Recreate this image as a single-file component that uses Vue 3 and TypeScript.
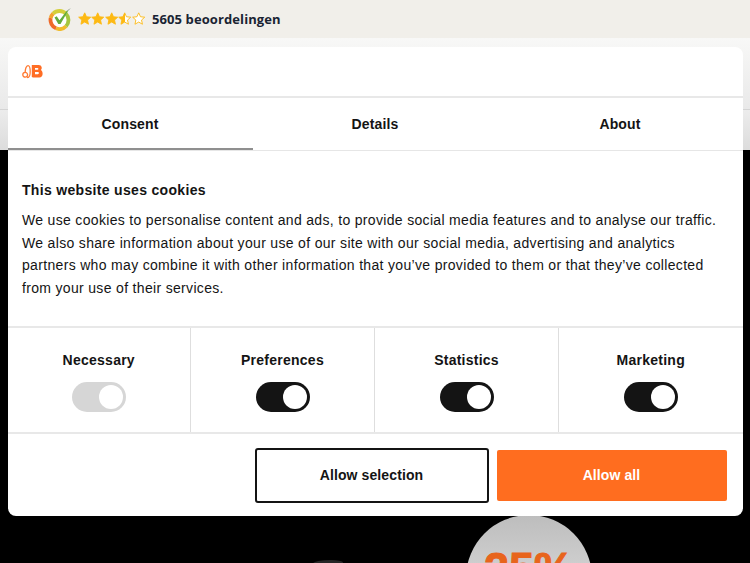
<script setup lang="ts">
const tabs = ["Consent", "Details", "About"]
const toggles = [
  { label: "Necessary", locked: true },
  { label: "Preferences", locked: false },
  { label: "Statistics", locked: false },
  { label: "Marketing", locked: false },
]
</script>

<template>
  <div class="page">
    <header class="review-bar">
      <svg class="seal" viewBox="0 0 24 24" width="24" height="24">
        <circle cx="11.500" cy="13" r="9" fill="#fff" />
        <path d="M5.100 6.600A9 9 0 0 1 18 6.800" fill="none" stroke="#d4cf3a" stroke-width="3.800" />
        <path d="M18 6.800A9 9 0 0 1 18 19.200" fill="none" stroke="#a5c63f" stroke-width="3.800" />
        <path d="M18 19.200A9 9 0 0 1 8 21.300" fill="none" stroke="#f0bb2c" stroke-width="3.800" />
        <path d="M8 21.300A9 9 0 0 1 2.700 11" fill="none" stroke="#ee6a2a" stroke-width="3.800" />
        <path d="M2.700 11A9 9 0 0 1 5.100 6.600" fill="none" stroke="#f3a42c" stroke-width="3.800" />
        <path d="M6.500 10.500l2.200-1.200 2.800 4L19 3.500l1 .6-7.500 12.800h-2.200z" fill="#62ac3c" />
        <path d="M19 3.500l4-2.500-3 3.100z" fill="#8c9a84" />
      </svg>
      <div class="stars">
        <svg v-for="n in 5" :key="n" viewBox="0 0 24 24" width="13.400" height="13.400">
          <defs>
            <linearGradient id="half">
              <stop offset="50%" stop-color="#fdb913" />
              <stop offset="50%" stop-color="#fff" />
            </linearGradient>
          </defs>
          <path
            d="M12 1.500l3.200 7 7.600.8-5.700 5.100 1.600 7.500L12 18l-6.700 3.900 1.600-7.500L1.200 9.300l7.600-.8z"
            :fill="n < 4 ? '#fdb913' : n === 4 ? 'url(#half)' : '#fff'"
            stroke="#fdb913"
            stroke-width="1.600"
          />
        </svg>
      </div>
      <span class="review-count">5605 beoordelingen</span>
    </header>

    <div class="backdrop">
      <div class="backdrop-top"></div>
      <div class="backdrop-mid"></div>
      <div class="backdrop-dark">
        <div class="promo-shape"></div>
        <div class="promo-circle"><span>25%</span></div>
      </div>
    </div>

    <section class="dialog">
      <div class="logo-row">
        <svg class="logo" viewBox="0 0 22 15" width="22" height="15">
          <circle cx="3.200" cy="10.800" r="2.400" fill="none" stroke="#ff7a33" stroke-width="1.300" />
          <path
            d="M3.200 8.400C3.200 5 4.200 1.600 6 1.600c1.700 0 2.200 3 2.200 6 0 2.600-.2 5.900-2.600 5.900"
            fill="none"
            stroke="#ff7a33"
            stroke-width="1.300"
            stroke-linecap="round"
          />
          <path d="M9.800 1h7c3 0 3.800 3.500 2.100 5 2.500 1.200 2.600 7.500-1.500 7.500h-6.300c-1.200 0-1.500-.9-1.300-2z" fill="#ff6d24" />
          <path d="M13 3.900h2.500c1.200 0 1.200 1.800 0 1.800H13zM13 8h2.900c1.400 0 1.400 2.200 0 2.200H13z" fill="#fff" />
        </svg>
      </div>

      <nav class="tabs">
        <div v-for="(tab, i) in tabs" :key="tab" class="tab" :class="{ active: i === 0 }">{{ tab }}</div>
      </nav>

      <div class="body">
        <h2>This website uses cookies</h2>
        <p>
          We use cookies to personalise content and ads, to provide social media features and to analyse our traffic.
          We also share information about your use of our site with our social media, advertising and analytics
          partners who may combine it with other information that you’ve provided to them or that they’ve collected
          from your use of their services.
        </p>
      </div>

      <div class="selector">
        <div v-for="item in toggles" :key="item.label" class="selector-cell">
          <strong>{{ item.label }}</strong>
          <span class="switch" :class="{ locked: item.locked }"><i></i></span>
        </div>
      </div>

      <div class="actions">
        <button class="btn outline">Allow selection</button>
        <button class="btn solid">Allow all</button>
      </div>
    </section>
  </div>
</template>

<style>
html,
body {
  margin: 0;
  background: #000;
}
</style>

<style scoped>
.page {
  position: relative;
  width: 750px;
  height: 563px;
  overflow: hidden;
  background: #000;
  font-family: "Liberation Sans", Arial, sans-serif;
  color: #141414;
}

.review-bar {
  height: 38px;
  padding-left: 48px;
  display: flex;
  align-items: center;
  background: #f1efea;
  box-sizing: border-box;
}

.seal {
  flex: none;
}

.stars {
  display: flex;
  margin-left: 6px;
}

.review-count {
  margin-left: 7px;
  font-family: "Open Sans", sans-serif;
  font-size: 13px;
  font-weight: 700;
  letter-spacing: 0.1px;
  color: #1a2433;
}

.backdrop {
  height: 525px;
  display: flex;
  flex-direction: column;
}

.backdrop-top {
  height: 71px;
  flex: none;
  background: linear-gradient(#f8f8f7, #e9e9e9);
  border-bottom: 1px solid #d4d4d4;
}

.backdrop-mid {
  height: 40px;
  flex: none;
  background: linear-gradient(#ececec, #dcdcdc);
}

.backdrop-dark {
  flex: 1;
  position: relative;
  background: #000;
}

.promo-shape {
  position: absolute;
  left: 313px;
  top: 410px;
  width: 30px;
  height: 6px;
  border-radius: 60% 40% 0 0;
  background: #262626;
}

.promo-circle {
  position: absolute;
  left: 466px;
  top: 365px;
  width: 126px;
  height: 126px;
  border-radius: 50%;
  background: linear-gradient(#bdbdbd, #e8e8e8);
  text-align: center;
}

.promo-circle span {
  display: block;
  margin-top: 29px;
  font-size: 45px;
  line-height: 50px;
  font-weight: 700;
  color: #e8641c;
  -webkit-text-stroke: 1px #e8641c;
}

.dialog {
  position: absolute;
  left: 7.500px;
  top: 47px;
  width: 735px;
  height: 469px;
  display: flex;
  flex-direction: column;
  background: #fff;
  border-radius: 8px;
  overflow: hidden;
}

.logo-row {
  height: 49px;
  flex: none;
  display: flex;
  align-items: center;
  padding-left: 14px;
  border-bottom: 2px solid #e8e8e8;
}

.tabs {
  display: grid;
  grid-template-columns: repeat(3, 1fr);
  height: 53px;
  flex: none;
  border-bottom: 1px solid #e6e6e6;
  box-sizing: border-box;
}

.tab {
  display: flex;
  align-items: center;
  justify-content: center;
  font-size: 14px;
  font-weight: 700;
  letter-spacing: 0.15px;
}

.tab.active {
  box-shadow: inset 0 -2px 0 #8f8f8f;
}

.body {
  height: 177px;
  flex: none;
  padding: 30px 14.500px 0;
  box-sizing: border-box;
  border-bottom: 2px solid #e8e8e8;
}

.body h2 {
  margin: 0 0 10px;
  font-size: 14px;
  line-height: 18px;
  font-weight: 700;
  letter-spacing: 0.32px;
}

.body p {
  margin: 0;
  font-size: 14px;
  line-height: 22.500px;
  letter-spacing: 0.325px;
}

.selector {
  height: 106px;
  flex: none;
  display: grid;
  grid-template-columns: 183.500px 184px 184px 183.500px;
  border-bottom: 2px solid #e8e8e8;
  box-sizing: border-box;
}

.selector-cell {
  display: flex;
  flex-direction: column;
  align-items: center;
  padding-top: 23px;
  border-right: 1px solid #dedede;
  box-sizing: border-box;
}

.selector-cell:last-child {
  border-right: 0;
}

.selector-cell strong {
  font-size: 14px;
  line-height: 18px;
  letter-spacing: 0.25px;
}

.switch {
  display: block;
  position: relative;
  width: 54px;
  height: 30px;
  margin-top: 13px;
  border-radius: 15px;
  background: #141414;
}

.switch i {
  position: absolute;
  right: 3px;
  top: 3px;
  width: 24px;
  height: 24px;
  border-radius: 50%;
  background: #fff;
}

.switch.locked {
  background: #d6d6d6;
}

.actions {
  flex: 1;
  display: flex;
  gap: 8px;
  padding: 16px 15px 0 247px;
  box-sizing: border-box;
}

.btn {
  height: 51px;
  padding: 0 0 2px;
  border-radius: 2px;
  font-family: inherit;
  font-size: 14px;
  font-weight: 700;
  letter-spacing: 0.1px;
  box-sizing: border-box;
}

.btn.outline {
  width: 234px;
  height: 55px;
  margin-top: -2px;
  background: #fff;
  color: #141414;
  border: 2px solid #141414;
  border-radius: 3px;
}

.btn.solid {
  width: 230px;
  background: #ff6d1f;
  color: #fff;
  border: 0;
}
</style>
